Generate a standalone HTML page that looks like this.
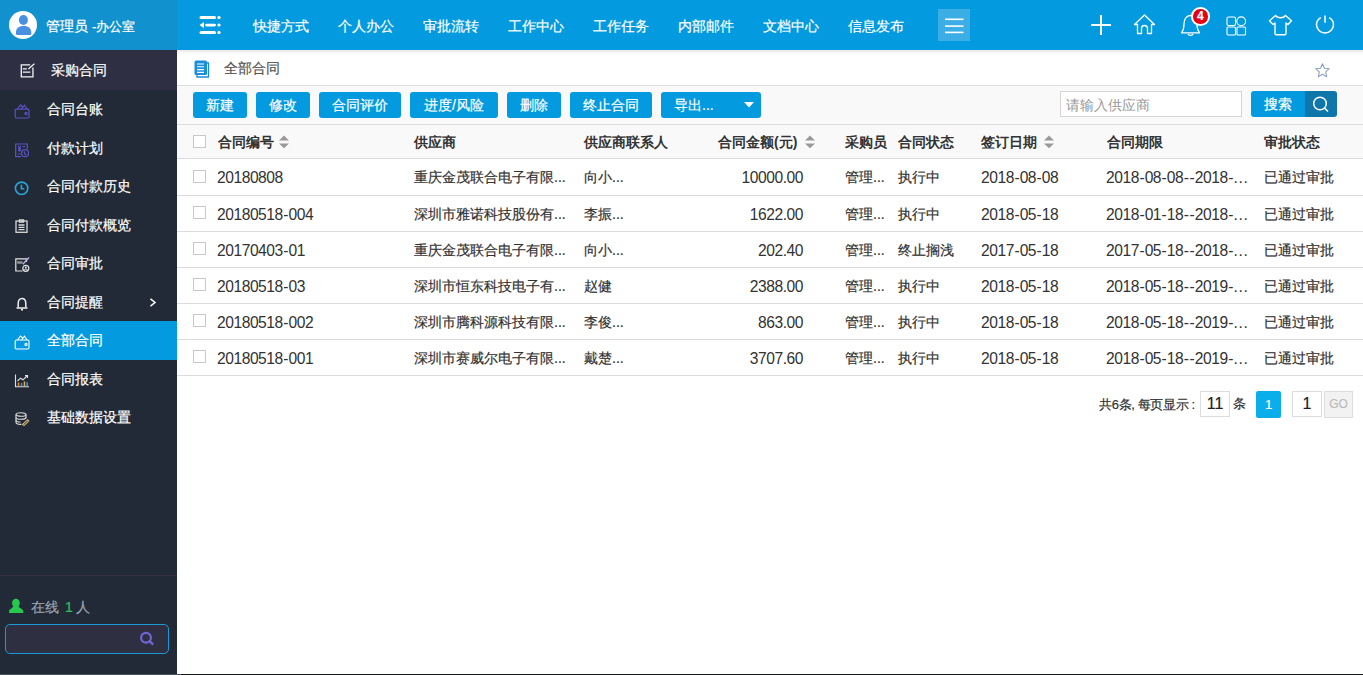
<!DOCTYPE html>
<html><head><meta charset="utf-8">
<style>
*{margin:0;padding:0;box-sizing:border-box}
html,body{width:1363px;height:675px;overflow:hidden;background:#fff;font-family:"Liberation Sans",sans-serif;font-size:14px;color:#333;-webkit-text-stroke:0.2px}
.abs{position:absolute}
#side{position:absolute;left:0;top:0;width:177px;height:675px;background:#212a36}
#sidehead{position:absolute;left:0;top:0;width:177px;height:50px;background:#1191ce}
#avatar{position:absolute;left:9px;top:11px;width:28px;height:28px;border-radius:50%;background:#fff;overflow:hidden}
#uname{position:absolute;left:46px;top:17px;color:#fff;font-size:14px;line-height:18px;white-space:nowrap}
#first{position:absolute;left:0;top:50px;width:177px;height:40px;background:#2e2f42}
.mi{position:absolute;left:0;width:177px;height:38.5px;color:#fff;font-size:14px}
.mi .t{position:absolute;left:47px;top:0;line-height:38.5px;white-space:nowrap}
.mi svg{position:absolute}
.mi.act{background:#049ae0}
#topbar{position:absolute;left:177px;top:0;width:1186px;height:50px;background:#049ae0}
.nav{position:absolute;top:17px;color:#fff;font-size:14px;line-height:18px;white-space:nowrap}
#crumb{position:absolute;left:177px;top:50px;width:1186px;height:36px;background:#fff;border-bottom:1px solid #dcdcdc}
#tool{position:absolute;left:177px;top:86px;width:1186px;height:39px;background:#f9f9f9;border-bottom:1px solid #dcdcdc}
.btn{position:absolute;top:6px;height:26px;background:#049ae0;color:#fff;border-radius:3px;font-size:14px;line-height:27px;text-align:center;white-space:nowrap}
#thead{position:absolute;left:177px;top:125px;width:1186px;height:34px;background:#f9f9f9;border-bottom:1px solid #dcdcdc}
.row{position:absolute;left:177px;width:1186px;border-bottom:1px solid #dcdcdc;background:#fff}
.c{position:absolute;white-space:nowrap;line-height:18px}
.th{font-weight:bold;color:#333;-webkit-text-stroke:0}
.cb{position:absolute;left:16px;width:13px;height:13px;border:1px solid #c8c8c8;background:#fff}
.n{font-size:15.6px;letter-spacing:-0.45px;-webkit-text-stroke:0;position:absolute;margin-top:1px}
.h{font-weight:normal;padding:0 0.5px}
.d{font-weight:normal;letter-spacing:0.75px}
.sort{position:absolute;width:10px;height:14px}
</style></head><body>
<div id="side">
  <div id="sidehead">
    <div id="avatar">
      <svg width="28" height="28" viewBox="0 0 28 28"><ellipse cx="14.4" cy="9" rx="4.5" ry="5" fill="#4a90e2"/><path d="M6.9 22 C6.9 17.5 9.5 15 14.6 15 C19.7 15 22.3 17.5 22.3 22 V22.8 C22.3 23.5 21.8 24 21.1 24 H8.1 C7.4 24 6.9 23.5 6.9 22.8 Z" fill="#4a90e2"/></svg>
    </div>
    <div id="uname">管理员 <span style="font-size:13px">-办公室</span></div>
  </div>
  <div id="first">
    <svg class="abs" style="left:19.5px;top:12.5px" width="16" height="16" viewBox="0 0 16 16" fill="none" stroke="#f4f4f4" stroke-width="1.3"><path d="M10.2 1.85 H1.3 V13.85 H12.95 V4.6"/><path d="M8.4 5.9 L14.4 0.8"/><path d="M2.8 5.9 H6.8 M2.8 9.1 H10.3"/></svg>
    <div class="abs" style="left:51px;top:11px;color:#fff;line-height:18px;white-space:nowrap">采购合同</div>
  </div>
  <div class="mi" style="top:90px">
    <svg style="left:14px;top:14px" width="16" height="15" viewBox="0 0 16 15" fill="none" stroke="#5d52c4" stroke-width="1.2"><rect x="1.2" y="5.2" width="13.8" height="8.8" rx="1.2"/><path d="M3.5 5 L6.5 1 L8.8 3.2 M7.5 5 L10.5 1.2 L13 5"/><circle cx="12" cy="9.5" r="1.1"/></svg>
    <span class="t">合同台账</span></div>
  <div class="mi" style="top:128.5px">
    <svg style="left:14px;top:14px" width="16" height="15" viewBox="0 0 16 15" fill="none" stroke="#5d52c4" stroke-width="1.2"><path d="M7 13.6 H1.7 V1 H13.3 V6"/><path d="M4 2.8 L5.5 4.8 L7 2.8 M5.5 4.8 V8.8 M4 5.6 H7 M4 7.4 H7 M8.6 3.6 H11 M4 11 H6.5"/><circle cx="11" cy="10.2" r="3.5"/><path d="M10.4 8.2 V10.4 L12.3 12.2"/></svg>
    <span class="t">付款计划</span></div>
  <div class="mi" style="top:167px">
    <svg style="left:14px;top:14px" width="15" height="15" viewBox="0 0 15 15" fill="none" stroke="#2ba3d8" stroke-width="1.6"><circle cx="7.6" cy="7.3" r="6.2"/><path d="M7.4 3.8 V7.8 H10.3"/></svg>
    <span class="t">合同付款历史</span></div>
  <div class="mi" style="top:205.5px">
    <svg style="left:15px;top:13px" width="13" height="14" viewBox="0 0 13 14" fill="none" stroke="#d8d8d8" stroke-width="1.3"><rect x="1" y="2" width="11" height="11.3"/><path d="M4.5 1 H8.5 V3 H4.5 Z"/><path d="M3.5 6 H9.5 M3.5 8.3 H9.5 M3.5 10.6 H9.5"/></svg>
    <span class="t">合同付款概览</span></div>
  <div class="mi" style="top:244px">
    <svg style="left:14px;top:13px" width="17" height="15" viewBox="0 0 17 15" fill="none" stroke="#e4e4e4" stroke-width="1.2"><path d="M8.5 14 H1.8 V1.8 H12.5 V5"/><path d="M3.2 5.5 H8.5" stroke="#9a9a9a" stroke-width="2.4"/><path d="M15 0.6 L8.8 7.2" stroke="#b6aee8" stroke-width="1.5"/><circle cx="11.8" cy="11.3" r="3"/><circle cx="11.8" cy="10.5" r="0.9" fill="#e4e4e4" stroke="none"/><path d="M10.2 13 C10.6 11.8 13 11.8 13.4 13" stroke-width="1"/></svg>
    <span class="t">合同审批</span></div>
  <div class="mi" style="top:282.5px">
    <svg style="left:15px;top:14px" width="14" height="14" viewBox="0 0 14 14" fill="none" stroke="#f0f0f0" stroke-width="1.5"><path d="M3.2 10.5 V6.5 C3.2 3.2 4.8 1.5 7 1.5 C9.2 1.5 10.8 3.2 10.8 6.5 V10.5"/><path d="M1.5 11 H12.5"/><path d="M6 12.8 H8"/></svg>
    <span class="t">合同提醒</span>
    <svg style="left:149px;top:15px" width="8" height="9" viewBox="0 0 8 9" fill="none" stroke="#fff" stroke-width="1.5"><path d="M1.5 0.8 L6 4.5 L1.5 8.2"/></svg></div>
  <div class="mi act" style="top:321px">
    <svg style="left:14px;top:13.5px" width="16" height="15" viewBox="0 0 16 15" fill="none" stroke="#fff" stroke-width="1.1"><rect x="1.2" y="5" width="13.8" height="9" rx="1.2"/><path d="M3.5 5 L6.5 1 L8.8 3.2 M7.5 5 L10.5 1.2 L13 5"/><circle cx="12" cy="9.5" r="1.1"/></svg>
    <span class="t">全部合同</span></div>
  <div class="mi" style="top:359.5px">
    <svg style="left:14px;top:14px" width="16" height="14" viewBox="0 0 16 14" fill="none" stroke="#e0e0e0" stroke-width="1.1"><path d="M1.5 0.5 V12.8 H15"/><path d="M4.5 12 V8.5" stroke="#e07b39" stroke-width="1.6"/><path d="M7.5 12 V9" stroke="#3a8fd8" stroke-width="1.6"/><path d="M10.5 12 V7.5" stroke="#e0b030" stroke-width="1.6"/><path d="M13.2 12 V8.2" stroke="#3a8fd8" stroke-width="1.6"/><path d="M3.5 7 L6.5 4.2 L9 5.8 L13 2"/><path d="M11 1.6 H13.5 V4"/></svg>
    <span class="t">合同报表</span></div>
  <div class="mi" style="top:398px">
    <svg style="left:15px;top:13.5px" width="15" height="14" viewBox="0 0 15 14" fill="none" stroke="#e0e0e0" stroke-width="1.1"><ellipse cx="6" cy="2.5" rx="5" ry="1.8"/><path d="M1 2.5 V10.5 C1 11.8 3.5 12.5 6.5 12.3"/><path d="M11 2.5 V6"/><path d="M1 5.5 C1 6.8 3.2 7.3 6 7.3 C8.8 7.3 11 6.8 11 5.5"/><path d="M1 8.2 C1 9.4 3 10 5.5 10"/><path d="M7.5 12.5 L12.5 7.8 L13.8 9 L9 13.6 Z" stroke="#c8b070"/></svg>
    <span class="t">基础数据设置</span></div>

  <div class="abs" style="left:0;top:575px;width:177px;height:1px;background:#333244"></div>
  <svg class="abs" style="left:9px;top:598px" width="15" height="16" viewBox="0 0 15 16"><ellipse cx="6.9" cy="5.1" rx="3.9" ry="4.4" fill="#28c84f"/><path d="M4.6 8.5 H9.2 L14.2 12.3 V14.9 H0.1 V12.3 Z" fill="#28c84f"/></svg>
  <div class="abs" style="left:31px;top:598px;line-height:18px;color:#9aa4ae;white-space:nowrap">在线 <span style="color:#2ac25a;margin:0 3px 0 2px">1</span>人</div>
  <div class="abs" style="left:5px;top:624px;width:164px;height:30px;border:1px solid #1a9ad6;border-radius:5px;background:#2e3042"></div>
  <svg class="abs" style="left:140px;top:631px" width="16" height="16" viewBox="0 0 16 16" fill="none" stroke="#7563d6" stroke-width="2.2"><circle cx="6" cy="6.7" r="4.9"/><path d="M9.6 10.2 L13.2 13.6" stroke-width="2.4"/></svg>
</div>

<div id="topbar">
  <svg class="abs" style="left:22px;top:15px" width="23" height="21" viewBox="0 0 23 21" fill="#fff"><rect x="0.5" y="1" width="16.5" height="3" rx="1.5"/><rect x="18.3" y="1" width="3.3" height="3" rx="1.5"/><rect x="6" y="8.7" width="11" height="2.8" rx="1.4"/><path d="M0.5 10.1 L5 6.9 V13.3 Z"/><rect x="18.3" y="8.6" width="3.3" height="3" rx="1.5"/><rect x="0.5" y="16" width="16.5" height="3" rx="1.5"/><rect x="18.3" y="16" width="3.3" height="3" rx="1.5"/></svg>
  <div class="nav" style="left:76px">快捷方式</div>
  <div class="nav" style="left:161px">个人办公</div>
  <div class="nav" style="left:246px">审批流转</div>
  <div class="nav" style="left:331px">工作中心</div>
  <div class="nav" style="left:416px">工作任务</div>
  <div class="nav" style="left:501px">内部邮件</div>
  <div class="nav" style="left:586px">文档中心</div>
  <div class="nav" style="left:671px">信息发布</div>
  <div class="abs" style="left:761px;top:9px;width:32px;height:32px;background:#3aaee5">
    <svg class="abs" style="left:6px;top:8px" width="20" height="18" viewBox="0 0 20 18" fill="#fff"><rect x="1" y="1.5" width="18.5" height="1.6"/><rect x="1" y="8.3" width="18.5" height="1.6"/><rect x="1" y="14.6" width="18.5" height="1.6"/></svg>
  </div>
  <!-- right icons -->
  <svg class="abs" style="left:914px;top:15px" width="20" height="20" viewBox="0 0 20 20" fill="#fff"><rect x="9" y="0" width="2" height="20"/><rect x="0" y="9" width="20" height="2"/></svg>
  <svg class="abs" style="left:956px;top:14px" width="23" height="21" viewBox="0 0 23 21" fill="none" stroke="#fff" stroke-width="1.3" stroke-linejoin="round"><path d="M1.5 10.5 L11.5 1 L21.5 10.5 H18.5 V19.5 H14.5 V14.5 C14.5 12.5 13.2 11.5 11.5 11.5 C9.8 11.5 8.5 12.5 8.5 14.5 V19.5 H4.5 V10.5 Z"/></svg>
  <svg class="abs" style="left:1003px;top:13px" width="22" height="24" viewBox="0 0 22 24" fill="none" stroke="#fff" stroke-width="1.3" stroke-linejoin="round"><path d="M1.5 19.8 C3.5 17.3 4 15 4 11 C4 6 6.5 2.5 10.5 2.5 C14.5 2.5 17 6 17 11 C17 15 17.5 17.3 19.5 19.8 Z"/><path d="M8 21 C8.5 22.8 12.5 22.8 13 21"/></svg>
  <div class="abs" style="left:1014px;top:7px;width:18.5px;height:18.5px;border-radius:50%;background:#e60012;border:2px solid #fff;color:#fff;font-size:12px;font-weight:bold;line-height:14.5px;text-align:center">4</div>
  <svg class="abs" style="left:1048.5px;top:15.5px" width="21" height="20" viewBox="0 0 21 20" fill="none" stroke="#fff" stroke-width="1.1"><rect x="1" y="1" width="8.5" height="8.5" rx="1.6"/><circle cx="15.2" cy="5.3" r="4.4"/><rect x="1" y="11" width="8.5" height="8" rx="1"/><rect x="11" y="11" width="8.5" height="8" rx="1"/></svg>
  <svg class="abs" style="left:1091px;top:14px" width="25" height="22" viewBox="0 0 25 22" fill="none" stroke="#fff" stroke-width="1.4" stroke-linejoin="round"><path d="M7.5 1.5 C8.5 3 10 3.8 12.5 3.8 C15 3.8 16.5 3 17.5 1.5 L23.5 6.8 L20 10.5 L18 9 V19.5 C18 20.2 17.5 20.7 16.8 20.7 H8.2 C7.5 20.7 7 20.2 7 19.5 V9 L5 10.5 L1.5 6.8 Z"/></svg>
  <svg class="abs" style="left:1138px;top:14px" width="20" height="21" viewBox="0 0 20 21" fill="none" stroke="#fff" stroke-width="1.5"><path d="M5.8 3.6 C3.2 5.1 1.5 7.6 1.5 10.5 C1.5 15.2 5.3 19 10 19 C14.7 19 18.5 15.2 18.5 10.5 C18.5 7.6 16.8 5.1 14.2 3.6"/><path d="M10 1.6 V8.7"/></svg>
</div>

<div id="crumb">
  <svg class="abs" style="left:17px;top:10px" width="16" height="18" viewBox="0 0 16 18"><path d="M3 3 H14.5 V17 H3 Z" fill="#fff" stroke="#1a8ed8" stroke-width="1.3"/><rect x="0.5" y="0.5" width="12.5" height="14.5" rx="1.5" fill="#1a8ed8"/><path d="M3 4 H10 M3 6.8 H10 M3 9.6 H10 M3 12.4 H10" stroke="#fff" stroke-width="1.1"/></svg>
  <div class="c" style="left:47px;top:9px;color:#555">全部合同</div>
  <svg class="abs" style="left:1138px;top:12.5px" width="15" height="16" viewBox="0 0 15 16" fill="none" stroke="#8ea2bd" stroke-width="1.1" stroke-linejoin="round"><path d="M7.50 0.70 L9.44 5.23 L14.35 5.68 L10.64 8.92 L11.73 13.72 L7.50 11.20 L3.27 13.72 L4.36 8.92 L0.65 5.68 L5.56 5.23 Z"/></svg>
</div>

<div class="abs" style="left:177px;top:50px;width:1186px;height:4px;background:linear-gradient(#f3ebe8 0,#f3ebe8 1px,#efefef 1px,#efefef 2px,#f7f7f7 2px,#f7f7f7 3px,#fcfcfc 3px)"></div>
<div id="tool">
  <div class="btn" style="left:16px;width:54px">新建</div>
  <div class="btn" style="left:79px;width:54px">修改</div>
  <div class="btn" style="left:142px;width:82px">合同评价</div>
  <div class="btn" style="left:233px;width:88px">进度/风险</div>
  <div class="btn" style="left:330px;width:54px">删除</div>
  <div class="btn" style="left:393px;width:82px">终止合同</div>
  <div class="btn" style="left:484px;width:100px;text-align:left;padding-left:13px">导出...
    <svg class="abs" style="left:83px;top:10px" width="10" height="6" viewBox="0 0 10 6" fill="#fff"><path d="M0 0 H10 L5 5.5 Z"/></svg></div>
  <div class="abs" style="left:883px;top:5px;width:182px;height:26px;border:1px solid #d6d6d6;background:#fff;color:#999;font-size:14px;line-height:23px;padding:2px 0 0 5px;white-space:nowrap;-webkit-text-stroke:0">请输入供应商</div>
  <div class="btn" style="left:1074px;top:5px;width:54px;border-radius:3px 0 0 3px">搜索</div>
  <div class="btn" style="left:1128px;top:5px;width:32px;background:#0e76ab;border-radius:0 3px 3px 0">
    <svg class="abs" style="left:7px;top:5px" width="18" height="18" viewBox="0 0 18 18" fill="none" stroke="#fff" stroke-width="1.5"><circle cx="8" cy="7.5" r="6.3"/><path d="M12.5 12 L16 15.5"/></svg></div>
</div>

<div id="thead">
  <div class="cb" style="top:10px"></div>
  <div class="c th" style="left:41px;top:8px">合同编号</div>
  <svg class="sort" style="left:102px;top:9.5px" viewBox="0 0 10 14" fill="#999"><path d="M5 0.4 L10 5.4 H0 Z M0 8.4 H10 L5 13.2 Z"/></svg>
  <div class="c th" style="left:237px;top:8px">供应商</div>
  <div class="c th" style="left:407px;top:8px">供应商联系人</div>
  <div class="c th" style="left:541px;top:8px">合同金额(元)</div>
  <svg class="sort" style="left:628px;top:9.5px" viewBox="0 0 10 14" fill="#999"><path d="M5 0.4 L10 5.4 H0 Z M0 8.4 H10 L5 13.2 Z"/></svg>
  <div class="c th" style="left:668px;top:8px">采购员</div>
  <div class="c th" style="left:721px;top:8px">合同状态</div>
  <div class="c th" style="left:804px;top:8px">签订日期</div>
  <svg class="sort" style="left:867px;top:9.5px" viewBox="0 0 10 14" fill="#999"><path d="M5 0.4 L10 5.4 H0 Z M0 8.4 H10 L5 13.2 Z"/></svg>
  <div class="c th" style="left:930px;top:8px">合同期限</div>
  <div class="c th" style="left:1087px;top:8px">审批状态</div>
</div>

<!--ROWS-->
<div class="row" style="top:159px;height:37px">
  <div class="cb" style="top:11px"></div>
  <div class="c n" style="left:40px;top:9px">20180808</div>
  <div class="c" style="left:237px;top:9px">重庆金茂联合电子有限...</div>
  <div class="c" style="left:407px;top:9px">向小...</div>
  <div class="c n" style="right:560px;top:9px">10000.00</div>
  <div class="c" style="left:668px;top:9px">管理...</div>
  <div class="c" style="left:721px;top:9px">执行中</div>
  <div class="c n" style="left:804px;top:9px">2018<b class="h">-</b>08<b class="h">-</b>08</div>
  <div class="c n" style="left:929px;top:9px">2018<b class="h">-</b>08<b class="h">-</b>08<b class="h">-</b><b class="h">-</b>2018<b class="h">-</b><b class="d">...</b></div>
  <div class="c" style="left:1087px;top:9px">已通过审批</div>
</div>
<div class="row" style="top:196px;height:36px">
  <div class="cb" style="top:10px"></div>
  <div class="c n" style="left:40px;top:9px">20180518<b class="h">-</b>004</div>
  <div class="c" style="left:237px;top:9px">深圳市雅诺科技股份有...</div>
  <div class="c" style="left:407px;top:9px">李振...</div>
  <div class="c n" style="right:560px;top:9px">1622.00</div>
  <div class="c" style="left:668px;top:9px">管理...</div>
  <div class="c" style="left:721px;top:9px">执行中</div>
  <div class="c n" style="left:804px;top:9px">2018<b class="h">-</b>05<b class="h">-</b>18</div>
  <div class="c n" style="left:929px;top:9px">2018<b class="h">-</b>01<b class="h">-</b>18<b class="h">-</b><b class="h">-</b>2018<b class="h">-</b><b class="d">...</b></div>
  <div class="c" style="left:1087px;top:9px">已通过审批</div>
</div>
<div class="row" style="top:232px;height:36px">
  <div class="cb" style="top:10px"></div>
  <div class="c n" style="left:40px;top:9px">20170403<b class="h">-</b>01</div>
  <div class="c" style="left:237px;top:9px">重庆金茂联合电子有限...</div>
  <div class="c" style="left:407px;top:9px">向小...</div>
  <div class="c n" style="right:560px;top:9px">202.40</div>
  <div class="c" style="left:668px;top:9px">管理...</div>
  <div class="c" style="left:721px;top:9px">终止搁浅</div>
  <div class="c n" style="left:804px;top:9px">2017<b class="h">-</b>05<b class="h">-</b>18</div>
  <div class="c n" style="left:929px;top:9px">2017<b class="h">-</b>05<b class="h">-</b>18<b class="h">-</b><b class="h">-</b>2018<b class="h">-</b><b class="d">...</b></div>
  <div class="c" style="left:1087px;top:9px">已通过审批</div>
</div>
<div class="row" style="top:268px;height:36px">
  <div class="cb" style="top:10px"></div>
  <div class="c n" style="left:40px;top:9px">20180518<b class="h">-</b>03</div>
  <div class="c" style="left:237px;top:9px">深圳市恒东科技电子有...</div>
  <div class="c" style="left:407px;top:9px">赵健</div>
  <div class="c n" style="right:560px;top:9px">2388.00</div>
  <div class="c" style="left:668px;top:9px">管理...</div>
  <div class="c" style="left:721px;top:9px">执行中</div>
  <div class="c n" style="left:804px;top:9px">2018<b class="h">-</b>05<b class="h">-</b>18</div>
  <div class="c n" style="left:929px;top:9px">2018<b class="h">-</b>05<b class="h">-</b>18<b class="h">-</b><b class="h">-</b>2019<b class="h">-</b><b class="d">...</b></div>
  <div class="c" style="left:1087px;top:9px">已通过审批</div>
</div>
<div class="row" style="top:304px;height:36px">
  <div class="cb" style="top:10px"></div>
  <div class="c n" style="left:40px;top:9px">20180518<b class="h">-</b>002</div>
  <div class="c" style="left:237px;top:9px">深圳市腾科源科技有限...</div>
  <div class="c" style="left:407px;top:9px">李俊...</div>
  <div class="c n" style="right:560px;top:9px">863.00</div>
  <div class="c" style="left:668px;top:9px">管理...</div>
  <div class="c" style="left:721px;top:9px">执行中</div>
  <div class="c n" style="left:804px;top:9px">2018<b class="h">-</b>05<b class="h">-</b>18</div>
  <div class="c n" style="left:929px;top:9px">2018<b class="h">-</b>05<b class="h">-</b>18<b class="h">-</b><b class="h">-</b>2019<b class="h">-</b><b class="d">...</b></div>
  <div class="c" style="left:1087px;top:9px">已通过审批</div>
</div>
<div class="row" style="top:340px;height:36px">
  <div class="cb" style="top:10px"></div>
  <div class="c n" style="left:40px;top:9px">20180518<b class="h">-</b>001</div>
  <div class="c" style="left:237px;top:9px">深圳市赛威尔电子有限...</div>
  <div class="c" style="left:407px;top:9px">戴楚...</div>
  <div class="c n" style="right:560px;top:9px">3707.60</div>
  <div class="c" style="left:668px;top:9px">管理...</div>
  <div class="c" style="left:721px;top:9px">执行中</div>
  <div class="c n" style="left:804px;top:9px">2018<b class="h">-</b>05<b class="h">-</b>18</div>
  <div class="c n" style="left:929px;top:9px">2018<b class="h">-</b>05<b class="h">-</b>18<b class="h">-</b><b class="h">-</b>2019<b class="h">-</b><b class="d">...</b></div>
  <div class="c" style="left:1087px;top:9px">已通过审批</div>
</div>
<!--/ROWS-->

<div class="abs" style="left:1099px;top:397px;font-size:13px;line-height:16px;color:#333;white-space:nowrap;letter-spacing:-0.35px">共6条, 每页显示 :</div>
<div class="abs" style="left:1200px;top:391px;width:30px;height:26px;border:1px solid #ddd;background:#fff;font-size:16px;line-height:24px;text-align:center;color:#222">11</div>
<div class="abs" style="left:1233px;top:396px;font-size:13px;line-height:16px;color:#333">条</div>
<div class="abs" style="left:1256px;top:391px;width:25px;height:27px;background:#0aaeea;border-radius:2px;color:#fff;font-size:13px;line-height:27px;text-align:center">1</div>
<div class="abs" style="left:1292px;top:391px;width:30px;height:26px;border:1px solid #ddd;background:#fff;font-size:16px;line-height:24px;text-align:center;color:#222">1</div>
<div class="abs" style="left:1324px;top:391px;width:29px;height:27px;border:1px solid #ddd;background:#f2f2f2;font-size:12px;line-height:25px;text-align:center;color:#bbb">GO</div>
<div class="abs" style="left:0;top:674px;width:181px;height:1px;background:#48525c"></div>
<div class="abs" style="left:181px;top:674px;width:1182px;height:1px;background:#15181d"></div>
</body></html>
